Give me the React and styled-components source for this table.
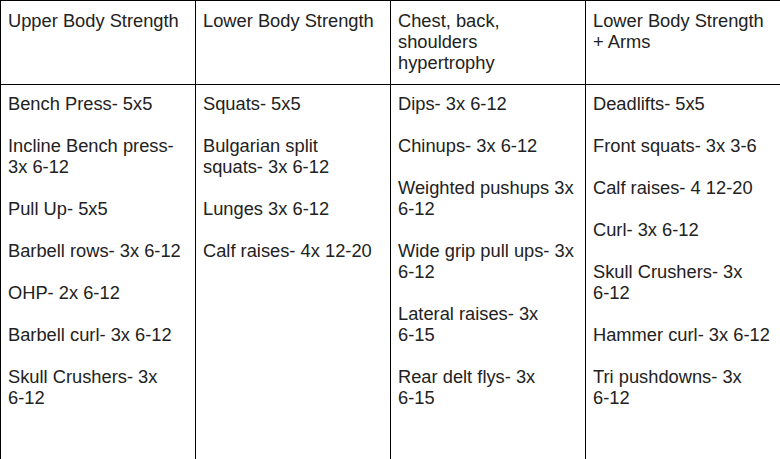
import React from "react";
import styled, { createGlobalStyle } from "styled-components";

const GlobalStyle = createGlobalStyle`
  html, body {
    margin: 0;
    padding: 0;
    background: #ffffff;
    overflow: hidden;
  }
  body {
    font-family: "Liberation Sans", Arial, sans-serif;
  }
`;

const Table = styled.div`
  display: grid;
  grid-template-columns: repeat(4, 195px);
  grid-template-rows: 84px minmax(400px, 1fr);
  min-height: 480px;
  width: max-content;
  border-left: 1px solid #000;
  border-top: 1px solid #000;
  color: #222222;
  font-size: 18.3px;
  line-height: 21px;
`;

const Cell = styled.div`
  box-sizing: border-box;
  border-right: 1px solid #000;
  border-bottom: 1px solid #000;
  padding: ${(p) => (p.$head ? "9px 9px 10px 7px" : "8px 9px 8px 7px")};
`;

const ExerciseList = styled.div`
  display: flex;
  flex-direction: column;
  gap: 21px;
`;

const Exercise = styled.div``;

const Word = styled.span`
  white-space: nowrap;
`;

const columns = [
  {
    title: "Upper Body Strength",
    items: [
      "Bench Press- 5x5",
      "Incline Bench press- 3x 6-12",
      "Pull Up- 5x5",
      "Barbell rows- 3x 6-12",
      "OHP- 2x 6-12",
      "Barbell curl- 3x 6-12",
      "Skull Crushers- 3x 6-12",
    ],
  },
  {
    title: "Lower Body Strength",
    items: [
      "Squats- 5x5",
      "Bulgarian split squats- 3x 6-12",
      "Lunges 3x 6-12",
      "Calf raises- 4x 12-20",
    ],
  },
  {
    title: "Chest, back, shoulders hypertrophy",
    items: [
      "Dips- 3x 6-12",
      "Chinups- 3x 6-12",
      "Weighted pushups 3x 6-12",
      "Wide grip pull ups- 3x 6-12",
      "Lateral raises- 3x 6-15",
      "Rear delt flys- 3x 6-15",
    ],
  },
  {
    title: "Lower Body Strength + Arms",
    items: [
      "Deadlifts- 5x5",
      "Front squats- 3x 3-6",
      "Calf raises- 4 12-20",
      "Curl- 3x 6-12",
      "Skull Crushers- 3x 6-12",
      "Hammer curl- 3x 6-12",
      "Tri pushdowns- 3x 6-12",
    ],
  },
];

const Words = ({ text }) =>
  text.split(" ").map((w, i, arr) => (
    <React.Fragment key={i}>
      <Word>{w}</Word>
      {i < arr.length - 1 ? " " : null}
    </React.Fragment>
  ));

export default function App() {
  return (
    <>
      <GlobalStyle />
      <Table>
        {columns.map((c) => (
          <Cell key={c.title} $head>
            <Words text={c.title} />
          </Cell>
        ))}
        {columns.map((c) => (
          <Cell key={c.title + "-body"}>
            <ExerciseList>
              {c.items.map((it) => (
                <Exercise key={it}>
                  <Words text={it} />
                </Exercise>
              ))}
            </ExerciseList>
          </Cell>
        ))}
      </Table>
    </>
  );
}
